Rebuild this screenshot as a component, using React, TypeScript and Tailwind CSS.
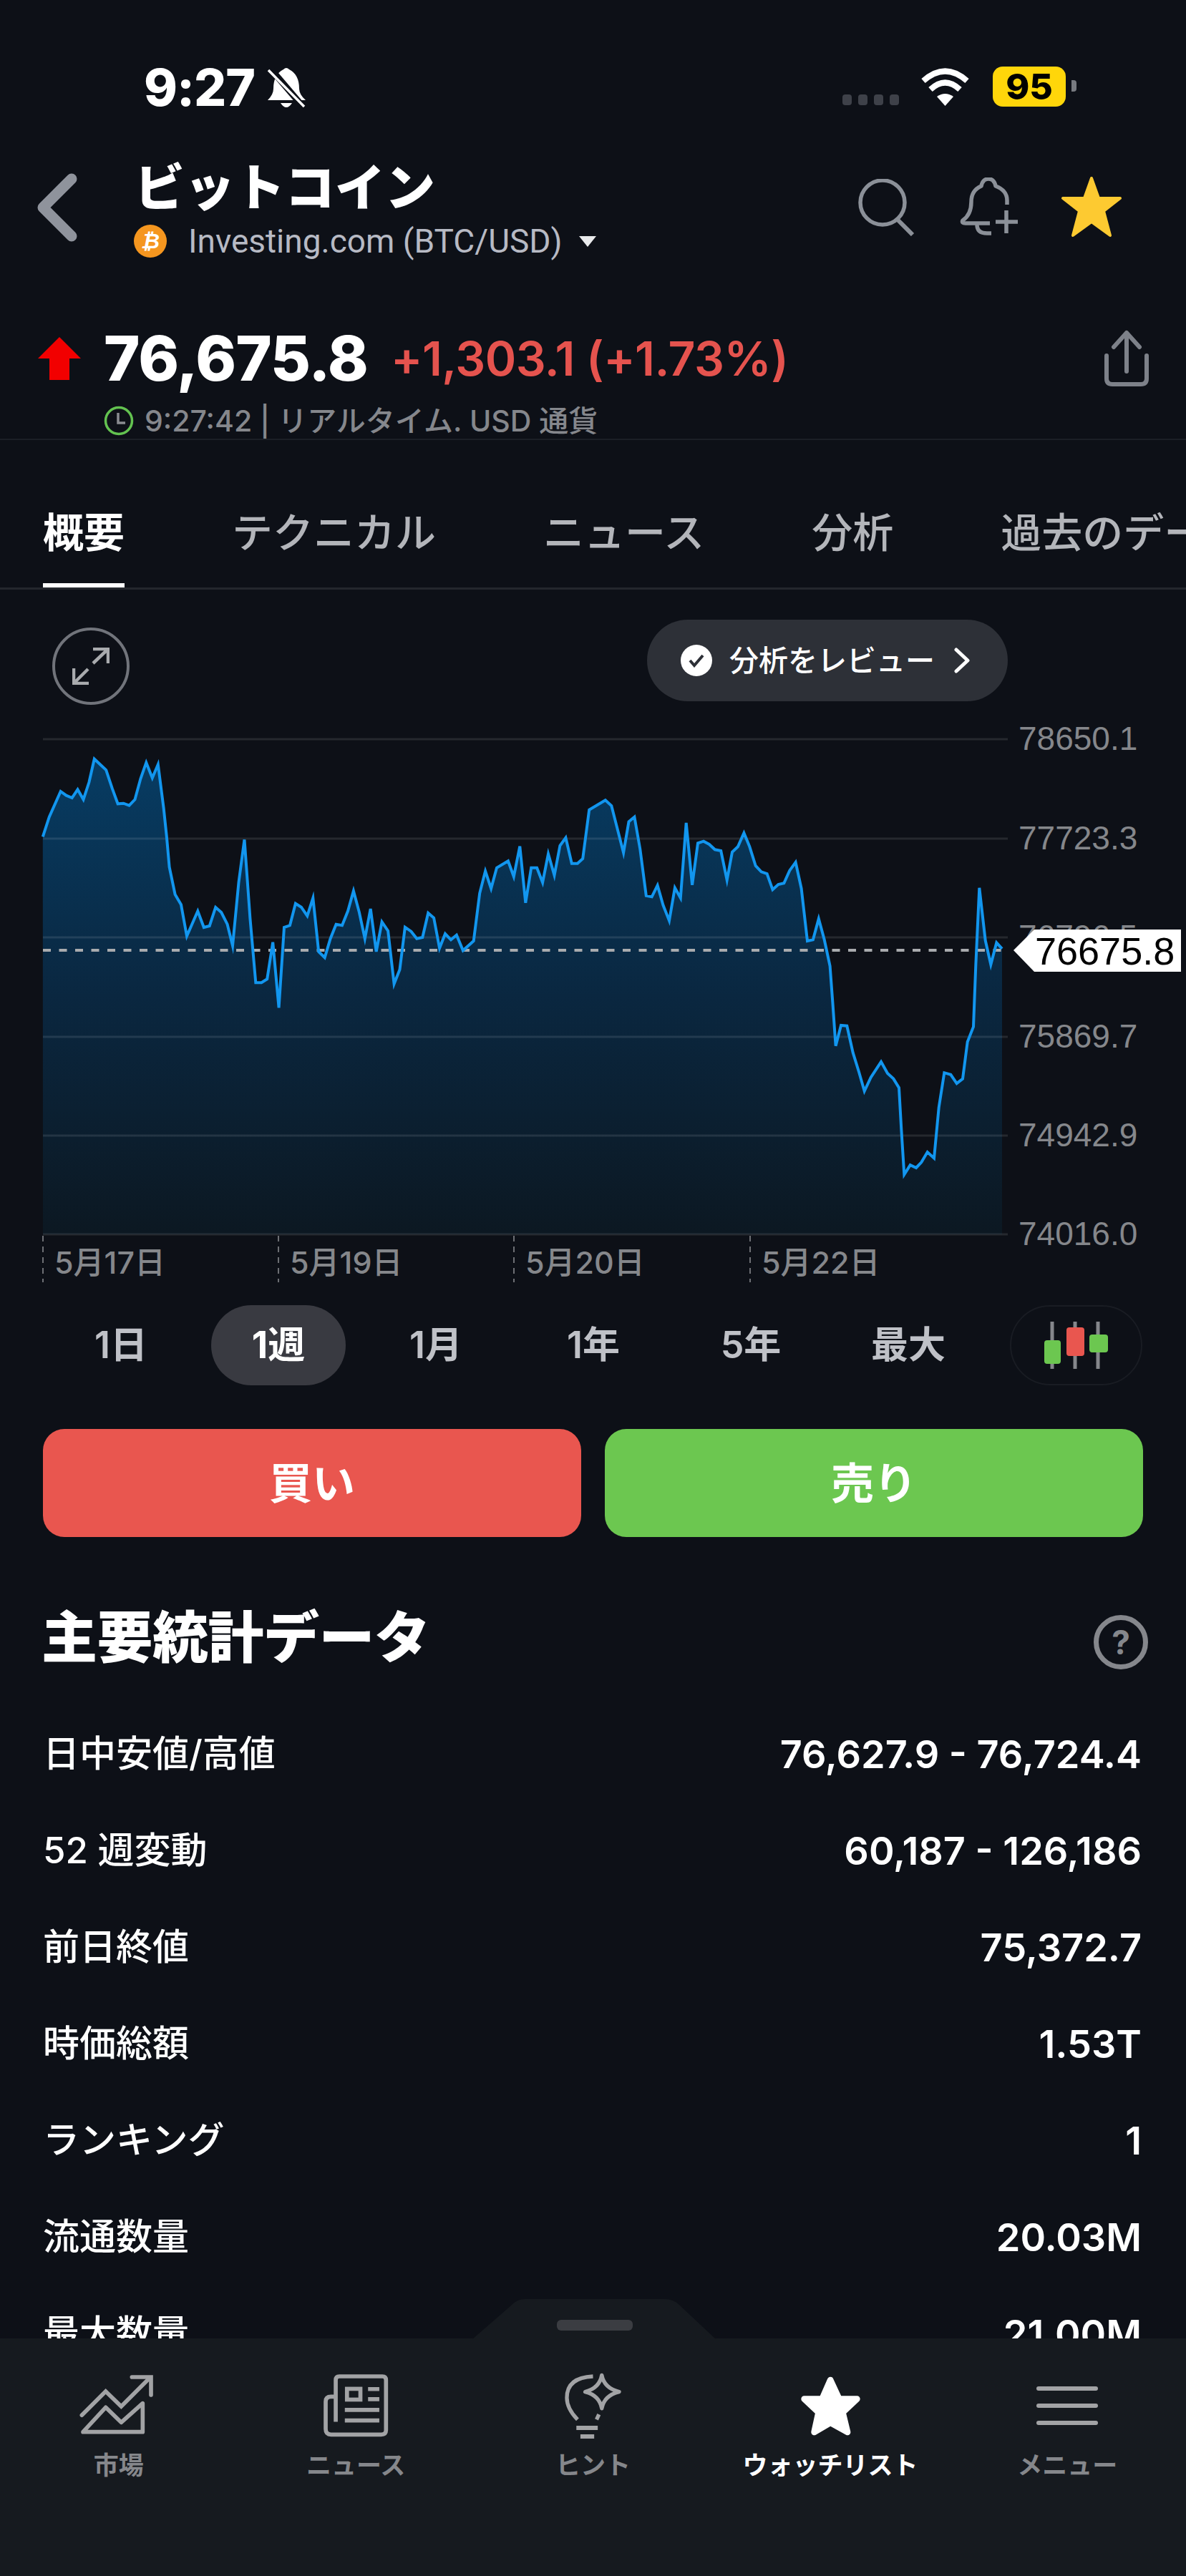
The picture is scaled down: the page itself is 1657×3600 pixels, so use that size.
import React from "react";

const f = (pts: number[][], ox: number, sx: number, oy: number, sy: number) =>
  pts.map(([x, y]) => [ox + x / sx, oy + y / sy]);

const a = f(
  [[113,508],[130,425],[160,318],[175,335],[190,345],[205,310],[220,352],[235,280],[249,182],[280,228],[296,305],[311,370],[326,368],[341,377],[356,352],[371,265],[386,197],[402,262],[417,205],[432,390],[440,510],[447,635],[462,750],[478,793],[493,925],[522,820],[538,888],[553,882],[569,804],[584,825],[600,875],[614,965],[630,700],[645,520],[660,850],[675,1120],[690,1120],[705,1105],[720,950],[736,1225],[750,888],[765,880],[780,788],[795,803],[811,840],[826,765],[841,990],[857,1015],[872,935],[887,875],[903,880],[918,820],[933,735],[948,825],[963,935],[978,810],[993,990],[1008,865],[1024,903],[1040,1125],[1055,1065],[1069,887],[1085,905],[1100,935],[1115,930],[1130,828],[1145,848],[1160,975],[1175,915],[1190,940],[1205,920],[1222,985],[1250,945],[1266,745],[1281,652],[1296,725],[1311,638],[1341,610],[1356,675],[1372,548],[1387,785],[1402,638],[1417,638],[1432,700],[1447,580],[1463,670],[1478,545],[1493,512],[1509,620],[1524,620],[1538,600],[1555,395]],
  0, 1.889, 1000, 3
);
const b = f(
  [[30,355],[46,378],[78,575],[92,445],[107,425],[122,560],[138,755],[153,760],[168,712],[183,795],[199,860],[214,722],[229,765],[244,450],[260,710],[275,535],[290,527],[305,540],[320,562],[336,567],[352,690],[366,572],[381,550],[397,492],[412,550],[428,630],[443,655],[458,663],[473,730],[488,708],[503,703],[518,650],[534,615],[549,725],[565,945],[580,940],[595,852],[610,940],[625,1050],[632,1200],[640,1385]],
  830, 1.896, 1000, 3
);
const c = f(
  [[525,870],[550,872],[575,970],[600,1040],[623,1110],[650,1060],[693,1003],[720,1045],[745,1065],[768,1098],[778,1250],[790,1415],[815,1380],[840,1390],[862,1370],[887,1333],[915,1355],[935,1170],[958,1043],[985,1050],[1010,1082],[1035,1065],[1055,930],[1080,875],[1090,650],[1105,368],[1130,560],[1153,648],[1177,568],[1200,590]],
  1000, 3, 1100, 2.613
);
const all = [...a, ...b, ...c];
const line = all.map(([x, y]) => `${x.toFixed(1)},${y.toFixed(1)}`).join(" ");
const area = `${line} 1400,1725 60,1725`;

const grid = [
  [1033, "78650.1"],
  [1172, "77723.3"],
  [1310, "76796.5"],
  [1449, "75869.7"],
  [1587, "74942.9"],
  [1725, "74016.0"],
] as const;

const dates = [
  [60, "5月17日"],
  [389, "5月19日"],
  [718, "5月20日"],
  [1048, "5月22日"],
] as const;

const stats = [
  ["日中安値/高値", "76,627.9 - 76,724.4"],
  ["52 週変動", "60,187 - 126,186"],
  ["前日終値", "75,372.7"],
  ["時価総額", "1.53T"],
  ["ランキング", "1"],
  ["流通数量", "20.03M"],
  ["最大数量", "21.00M"],
];

const SANS = "font-['Inter','Noto_Sans_CJK_JP',sans-serif]";

function Chart() {
  return (
    <svg width="1657" height="800" viewBox="0 1000 1657 800" className="block shrink-0">
      <defs>
        <linearGradient id="fill" x1="0" y1="1060" x2="0" y2="1725" gradientUnits="userSpaceOnUse">
          <stop offset="0" stopColor="#073c63" />
          <stop offset="0.5" stopColor="#0a2740" />
          <stop offset="1" stopColor="#0c1822" />
        </linearGradient>
      </defs>
      <polygon points={area} fill="url(#fill)" />
      {grid.map(([y]) => (
        <line key={y} x1="60" x2="1408" y1={y} y2={y} stroke="#ffffff" strokeOpacity="0.1" strokeWidth="3" />
      ))}
      <line x1="60" x2="1408" y1="1328" y2="1328" stroke="#a9abae" strokeWidth="4" strokeDasharray="11 11.5" />
      <polyline points={line} fill="none" stroke="#1296ef" strokeWidth="4" strokeLinejoin="miter" strokeMiterlimit="6" />
      {dates.map(([x, t]) => (
        <g key={x}>
          <line x1={x} x2={x} y1="1727" y2="1792" stroke="#6d6f74" strokeWidth="2" strokeDasharray="8 7" />
          <text x={x + 16} y="1780" fontSize="43" fontWeight="500" fill="#85878b" fontFamily="'Inter','Noto Sans CJK JP',sans-serif">
            {t}
          </text>
        </g>
      ))}
      {grid.map(([y, t]) => (
        <text key={t} x="1423" y={y + 15} fontSize="46" fill="#85878b" fontFamily="'Liberation Sans',sans-serif">
          {t}
        </text>
      ))}
      <polygon points="1416,1328 1445,1299 1650,1299 1650,1358 1445,1358 1416,1328" fill="#ffffff" />
      <text x="1446" y="1348" fontSize="54" fill="#000000" fontFamily="'Liberation Sans',sans-serif">
        76675.8
      </text>
    </svg>
  );
}

function NavIcon({ i }: { i: number }) {
  if (i === 0)
    return (
      <svg width="110" height="90" viewBox="70 90 330 270" fill="none" stroke="#a2a3a5" strokeWidth="17">
        <path d="M80 265 L180 165 L245 228 L365 108" strokeLinecap="round" />
        <path d="M290 105 H370 V180" strokeLinecap="round" />
        <path d="M85 335 L180 232 L245 295 L335 215 V335 Z" strokeLinejoin="round" />
      </svg>
    );
  if (i === 1)
    return (
      <svg width="97" height="92" viewBox="1080 80 290 275" fill="none" stroke="#a2a3a5" strokeWidth="17">
        <path d="M1140 285 V110 Q1140 95 1155 95 H1335 Q1350 95 1350 110 V320 Q1350 338 1330 338 H1120 Q1098 338 1098 315 V200 Q1098 180 1120 180 H1140" />
        <rect x="1187" y="147" width="56" height="45" />
        <path d="M1275 148 H1322 M1275 190 H1322 M1178 235 H1322 M1178 279 H1322" />
      </svg>
    );
  if (i === 2)
    return (
      <svg width="83" height="97" viewBox="100 60 250 290" fill="none" stroke="#a2a3a5" strokeWidth="16">
        <path d="M225 80 Q115 85 115 170 Q115 215 160 262" />
        <path d="M240 262 L250 240" />
        <path d="M155 297 H245 M172 333 H230" strokeWidth="18" />
        <path d="M262 75 Q272 130 335 145 Q272 160 262 215 Q252 160 192 145 Q252 130 262 75 Z" strokeLinejoin="round" />
      </svg>
    );
  if (i === 3)
    return (
      <svg width="88" height="87" viewBox="1060 75 265 260">
        <polygon
          points="1193,95 1230,175 1305,175 1245,232 1265,315 1193,275 1125,315 1143,232 1083,175 1158,175"
          fill="#fff"
          stroke="#fff"
          strokeWidth="26"
          strokeLinejoin="round"
        />
      </svg>
    );
  return (
    <div className="flex flex-col gap-[18px] w-[86px]">
      <div className="h-[6px] rounded-full bg-[#a2a3a5]" />
      <div className="h-[6px] rounded-full bg-[#a2a3a5]" />
      <div className="h-[6px] rounded-full bg-[#a2a3a5]" />
    </div>
  );
}

const navLabels = ["市場", "ニュース", "ヒント", "ウォッチリスト", "メニュー"];

export default function App() {
  return (
    <div className={`relative w-[1657px] h-[3600px] overflow-hidden bg-[#0d1017] text-white ${SANS}`}>
      {/* status bar */}
      <div className="flex items-start h-[210px] pt-[87px] pl-[201px]">
        <span className="text-[71px] leading-[70px] font-extrabold tracking-[-1px]">9:27</span>
        <svg width="56" height="57" viewBox="0 0 56 57" className="ml-[16px] mt-[7px]">
          <path d="M24 3 Q28 -1 32 3 Q46 10 46 30 Q46 38 55 46 H2 Q10 38 10 30 Q10 10 24 3 Z" fill="#fff" />
          <path d="M20 50 Q28 62 36 50 Z" fill="#fff" />
          <line x1="6" y1="2" x2="52" y2="56" stroke="#0d1017" strokeWidth="9" />
          <line x1="3" y1="4" x2="53" y2="55" stroke="#fff" strokeWidth="3.5" />
        </svg>
        <div className="ml-auto flex items-start">
          <div className="flex gap-[9px] mt-[45px]">
            {[0, 1, 2, 3].map((k) => (
              <div key={k} className="w-[13px] h-[15px] rounded-[4px] bg-[#3e4149]" />
            ))}
          </div>
          <svg width="71" height="54" viewBox="0 0 71 54" className="ml-[29px] mt-[7px]">
            <path d="M5 19 Q35.5 -8 66 19" fill="none" stroke="#fff" strokeWidth="8" />
            <path d="M15 31 Q35.5 12 56 31" fill="none" stroke="#fff" strokeWidth="8" />
            <path d="M35.5 54 L24 41 Q35.5 33 47 41 Z" fill="#fff" />
          </svg>
          <div className="ml-[31px] mt-[6px] w-[102px] h-[56px] rounded-[14px] bg-[#ffd60a] flex items-center justify-center text-black text-[50px] font-extrabold leading-none">
            95
          </div>
          <div className="ml-[8px] mt-[25px] mr-[153px] w-[7px] h-[16px] rounded-r-[4px] bg-[#777a80]" />
        </div>
      </div>

      {/* header */}
      <div className="flex h-[170px]">
        <svg width="58" height="96" viewBox="0 0 58 96" className="ml-[50px] mt-[32px] shrink-0">
          <path d="M50 8 L10 48 L50 88" fill="none" stroke="#8f939c" strokeWidth="15" strokeLinecap="round" strokeLinejoin="round" />
        </svg>
        <div className="ml-[80px] flex flex-col shrink-0">
          <div className="text-[70px] leading-[90px] font-black mt-[8px]">ビットコイン</div>
          <div className="flex items-center mt-[3px] -ml-[1px]">
            <div className="relative w-[46px] h-[46px] rounded-full bg-[#f5961f] flex items-center justify-center">
              <span className="text-[30px] leading-none font-bold italic text-white font-['DejaVu_Sans',sans-serif]">₿</span>
            </div>
            <span className="ml-[30px] text-[46px] leading-[52px] text-[#b7bac4] font-['Roboto',sans-serif]">
              Investing.com (BTC/USD)
            </span>
            <svg width="24" height="15" viewBox="0 0 24 15" className="ml-[23px]">
              <path d="M0 0 H24 L12 15 Z" fill="#e9eaec" />
            </svg>
          </div>
        </div>
        <div className="ml-auto flex items-start pt-[40px] pr-[88px]">
          <svg width="80" height="80" viewBox="0 0 80 80" fill="none" stroke="#8b9098" strokeWidth="5.5">
            <circle cx="35" cy="33" r="31" />
            <path d="M55 56 L77 78" strokeWidth="6" />
          </svg>
          <svg width="83" height="82" viewBox="0 0 83 82" fill="none" stroke="#8b9098" strokeWidth="5.5" className="ml-[63px] -mt-[2px]">
            <path d="M66 38 V32 Q66 18 50 12 Q48 2 40 2 Q32 2 30 12 Q16 18 16 34 Q16 52 4 60 Q2 64 8 64 H42" strokeLinejoin="round" />
            <path d="M24 66 Q24 78 38 78 H44" />
            <path d="M50 62 H81 M65 46 V78" />
          </svg>
          <svg width="88" height="88" viewBox="0 0 88 88" className="ml-[57px] -mt-[5px]">
            <polygon points="44,4 54,32 84,32 61,50 70,84 44,65 18,84 27,50 4,32 34,32" fill="#fdca31" stroke="#fdca31" strokeWidth="4" strokeLinejoin="round" />
          </svg>
        </div>
      </div>

      {/* price */}
      <div className="relative h-[235px] border-b-[2px] border-[#1b1f26]">
        <div className="flex items-center pt-[82px] h-[160px]">
          <svg width="60" height="60" viewBox="0 0 60 60" className="ml-[53px] shrink-0">
            <path d="M30 0 L60 30 H44 V60 H16 V30 H0 Z" fill="#f20000" />
          </svg>
          <span className="ml-[32px] text-[86px] leading-none font-extrabold tracking-[-1px]">76,675.8</span>
          <span className="ml-[32px] text-[66px] leading-none font-semibold text-[#e5534e] tracking-[-0.5px]">+1,303.1 (+1.73%)</span>
          <svg width="62" height="80" viewBox="0 0 62 80" fill="none" stroke="#7d8189" strokeWidth="6" className="ml-auto mr-[52px] shrink-0">
            <path d="M31 58 V4 M13 24 L31 4 L49 24" strokeLinecap="round" strokeLinejoin="round" />
            <path d="M3 36 V68 Q3 76 11 76 H51 Q59 76 59 68 V36" strokeLinecap="round" />
          </svg>
        </div>
        <div className="flex items-center ml-[145px] mt-[24px]">
          <svg width="42" height="42" viewBox="0 0 42 42" fill="none" stroke="#63c250" strokeWidth="3.5" className="shrink-0">
            <circle cx="21" cy="21" r="18.5" />
            <path d="M20 10 V24 H30" stroke="#8a8c91" />
          </svg>
          <span className="ml-[15px] text-[41px] leading-[48px] font-medium text-[#85878c]">9:27:42 | リアルタイム. USD 通貨</span>
        </div>
      </div>

      {/* tabs */}
      <div className="flex h-[209px] pt-[100px] pl-[60px] gap-[150px] whitespace-nowrap border-b-[3px] border-[#24272d] text-[57px] leading-[60px] font-medium text-[#b3b5ba]">
        <div className="relative font-bold text-white shrink-0">
          概要
          <div className="absolute left-0 right-0 top-[100px] h-[6px] bg-white" />
        </div>
        <div className="shrink-0">テクニカル</div>
        <div className="shrink-0">ニュース</div>
        <div className="shrink-0">分析</div>
        <div className="shrink-0">過去のデータ</div>
      </div>

      {/* chart controls */}
      <div className="flex items-start h-[176px]">
        <div className="ml-[73px] mt-[53px] w-[108px] h-[108px] rounded-full border-[4px] border-[#71747b] flex items-center justify-center shrink-0">
          <svg width="52" height="52" viewBox="0 0 52 52" fill="none" stroke="#a9abae" strokeWidth="4.5">
            <path d="M29 22 L50 2 M29 2 H50 V22 M22 30 L2 50 M2 29 V50 H23" />
          </svg>
        </div>
        <div className="ml-auto mr-[249px] mt-[42px] flex items-center w-[504px] h-[114px] rounded-full bg-[#2d3037]">
          <div className="ml-[47px] w-[44px] h-[44px] rounded-full bg-white flex items-center justify-center shrink-0">
            <svg width="24" height="20" viewBox="0 0 24 20" fill="none" stroke="#2d3037" strokeWidth="4">
              <path d="M3 10 L9 17 L21 3" />
            </svg>
          </div>
          <span className="ml-[24px] text-[41px] leading-none font-medium whitespace-nowrap">分析をレビュー</span>
          <svg width="24" height="36" viewBox="0 0 24 36" fill="none" stroke="#fff" strokeWidth="5" className="ml-[26px]">
            <path d="M4 3 L20 18 L4 33" strokeLinecap="round" strokeLinejoin="round" />
          </svg>
        </div>
      </div>

      <Chart />

      {/* range */}
      <div className="flex h-[160px] pt-[24px] pl-[75px]">
        <div className="flex gap-[32px] text-[52px] font-semibold text-[#bfc1c7]">
          {["1日", "1週", "1月", "1年", "5年", "最大"].map((t, i) => (
            <div
              key={t}
              className={
                i === 1
                  ? "w-[188px] h-[112px] rounded-full bg-[#393a41] text-white font-bold flex items-center justify-center"
                  : "w-[188px] h-[112px] rounded-full flex items-center justify-center"
              }
            >
              {t}
            </div>
          ))}
        </div>
        <div className="ml-[48px] w-[185px] h-[112px] rounded-[56px] border-[2px] border-[#191c23] flex items-center justify-center">
          <svg width="94" height="68" viewBox="0 0 94 68">
            <path d="M13 1 V67 M45 1 V67 M77 1 V67" stroke="#85878c" strokeWidth="5" />
            <rect x="2" y="27" width="23" height="33" rx="4" fill="#6cc750" />
            <rect x="33" y="9" width="25" height="40" rx="4" fill="#e9564f" />
            <rect x="65" y="19" width="26" height="25" rx="4" fill="#6cc750" />
          </svg>
        </div>
      </div>

      {/* buy / sell */}
      <div className="flex gap-[33px] px-[60px] pt-[37px]">
        <div className="flex-1 h-[151px] rounded-[30px] bg-[#e9564f] flex items-center justify-center text-[60px] font-bold">買い</div>
        <div className="flex-1 h-[151px] rounded-[30px] bg-[#6cc750] flex items-center justify-center text-[60px] font-bold">売り</div>
      </div>

      {/* stats */}
      <div className="flex items-start justify-between h-[236px] pl-[58px] pr-[53px] pt-[89px]">
        <div className="text-[78px] leading-[104px] font-black tracking-[-0.5px]">主要統計データ</div>
        <div className="mt-[20px] w-[76px] h-[76px] rounded-full border-[7px] border-[#85878c] flex items-center justify-center text-[46px] font-bold text-[#85878c] leading-none">
          ?
        </div>
      </div>
      <div className="pl-[60px] pr-[62px]">
        {stats.map(([l, v]) => (
          <div key={l} className="flex items-center justify-between h-[135px] font-medium">
            <span className="text-[51px]">{l}</span>
            <span className="font-semibold text-[54px]">{v}</span>
          </div>
        ))}
      </div>

      {/* bottom nav */}
      <div className="absolute left-0 right-0 bottom-0 h-[332px] bg-[#161a1f]">
        <svg width="340" height="57" viewBox="0 0 340 57" className="absolute left-[660px] -top-[56px]">
          <path d="M0 57 L54 10 Q62 1 74 1 H268 Q282 1 290 10 L340 57 Z" fill="#161a1f" />
        </svg>
        <div className="absolute left-[778px] -top-[26px] w-[106px] h-[15px] rounded-[6px] bg-[#3b3d42]" />
        <div className="grid grid-cols-5 pt-[44px]">
          {navLabels.map((t, i) => (
            <div key={t} className="flex flex-col items-center">
              <div className="h-[100px] flex items-center justify-center">
                <NavIcon i={i} />
              </div>
              <span className={i === 3 ? "mt-[11px] text-[35px] leading-[44px] font-bold text-white" : "mt-[11px] text-[35px] leading-[44px] font-bold text-[#85878b]"}>
                {t}
              </span>
            </div>
          ))}
        </div>
      </div>
    </div>
  );
}
